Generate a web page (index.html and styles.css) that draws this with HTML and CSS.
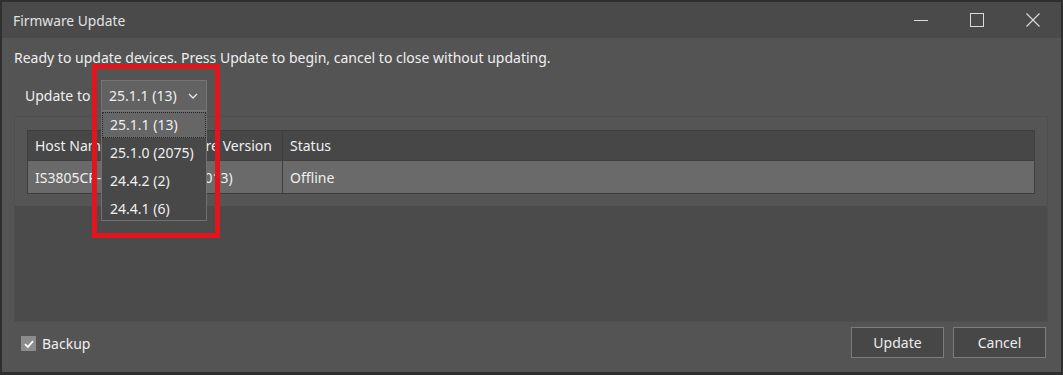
FILE: index.html
```html
<!DOCTYPE html>
<html lang="en">
<head>
  <meta charset="UTF-8" />
  <title>Firmware Update</title>
  <link rel="stylesheet" href="styles.css">
</head>
<body>
  <div class="window">
    <div class="titlebar">
      <span class="title">Firmware Update</span>
      <div class="controls">
        <span class="ctl">
          <svg width="14" height="14" viewBox="0 0 14 14"><path d="M0 7.5H14" stroke="#dcdcdc" stroke-width="1"/></svg>
        </span>
        <span class="ctl">
          <svg width="14" height="14" viewBox="0 0 14 14"><rect x="0.5" y="0.5" width="13" height="13" fill="none" stroke="#dcdcdc" stroke-width="1"/></svg>
        </span>
        <span class="ctl">
          <svg width="14" height="14" viewBox="0 0 14 14"><path d="M0.5 0.5L13.5 13.5M13.5 0.5L0.5 13.5" stroke="#dcdcdc" stroke-width="1.1"/></svg>
        </span>
      </div>
    </div>

    <div class="content">
      <p class="msg">Ready to update devices. Press Update to begin, cancel to close without updating.</p>

      <div class="update-row">
        <span class="label">Update to</span>
        <div class="combo">
          <span>25.1.1 (13)</span>
          <svg class="chev" width="10" height="6" viewBox="0 0 10 6"><path d="M1 1L5 5L9 1" fill="none" stroke="#e8e8e8" stroke-width="1.3"/></svg>
          <ul class="dropdown">
            <li class="selected">25.1.1 (13)</li>
            <li>25.1.0 (2075)</li>
            <li>24.4.2 (2)</li>
            <li>24.4.1 (6)</li>
          </ul>
          <div class="highlight"></div>
        </div>
      </div>

      <div class="panel">
        <div class="grid-wrap">
          <table class="grid">
            <tr class="head">
              <th class="c-host">Host Name</th>
              <th class="c-fw">Firmware Version</th>
              <th>Status</th>
            </tr>
            <tr class="row">
              <td class="c-host">IS3805CP-01</td>
              <td class="c-fw">24.4.1 (013)</td>
              <td>Offline</td>
            </tr>
          </table>
        </div>
      </div>
    </div>

    <div class="footer">
      <label class="check">
        <span class="box">
          <svg width="14" height="14" viewBox="0 0 14 14"><path d="M3 7.2L5.8 10L11 4.2" fill="none" stroke="#ffffff" stroke-width="1.8"/></svg>
        </span>
        Backup
      </label>
      <div class="buttons">
        <button class="btn">Update</button>
        <button class="btn">Cancel</button>
      </div>
    </div>
  </div>
</body>
</html>
```

FILE: styles.css
```css
* { box-sizing: border-box; }
html, body {
  margin: 0;
  padding: 0;
  background: #2e2e2e;
}
body {
  font-family: "Noto Sans", "Open Sans", sans-serif;
  font-size: 14px;
  color: #efefef;
}
.window {
  width: 1063px;
  height: 373px;
  border: 2px solid #2f2f2f;
  border-bottom-width: 1px;
  background: #545454;
  display: flex;
  flex-direction: column;
}
.titlebar {
  height: 36px;
  background: #4a4a4a;
  display: flex;
  align-items: center;
  justify-content: space-between;
  padding-left: 11px;
  flex-shrink: 0;
}
.title {
  color: #e2e2e2;
  font-size: 13.8px;
}
.controls {
  display: flex;
  height: 100%;
}
.ctl {
  width: 56px;
  display: flex;
  align-items: center;
  justify-content: center;
}
.ctl svg { display: block; }
.content {
  flex: 1;
  display: flex;
  flex-direction: column;
  padding: 0 13px 0 12px;
}
.msg {
  margin: 0;
  padding-top: 10px;
  height: 42px;
}
.update-row {
  display: flex;
  align-items: center;
  padding-left: 11px;
  height: 31px;
}
.label { width: 76px; }
.combo {
  position: relative;
  width: 106px;
  height: 31px;
  background: #626262;
  border: 1px solid #747474;
  display: flex;
  align-items: center;
  justify-content: space-between;
  padding: 0 8px 0 7px;
  z-index: 2;
}
.chev { display: block; margin-top: 1px; }
.dropdown {
  position: absolute;
  left: -1px;
  top: 30px;
  width: 106px;
  margin: 0;
  padding: 0;
  list-style: none;
  background: #484848;
  border: 1px solid #707070;
}
.dropdown li {
  height: 28px;
  line-height: 27px;
  padding-left: 8px;
}
.dropdown li.selected {
  background: #666666;
  border: 1px dotted #262626;
  height: 26px;
  line-height: 24px;
  padding-left: 7px;
  margin-bottom: 1px;
}
.dropdown li:last-child { height: 25px; }
.highlight {
  position: absolute;
  left: -10px;
  top: -17px;
  width: 128px;
  height: 174px;
  border: 5px solid #e3151c;
}
.panel {
  margin-top: 5px;
  height: 206px;
  background: #4b4b4b;
  border: 1px solid #4f4f4f;
}
.grid-wrap {
  background: #555555;
  padding: 13px 12px 12px 12px;
}
.grid {
  width: 100%;
  border-collapse: collapse;
  border: 1px solid #3d3d3d;
}
.grid th, .grid td {
  text-align: left;
  font-weight: normal;
  padding: 0 7px;
  border-right: 1px solid #3f3f3f;
}
.grid .head th {
  height: 30px;
  background: #474747;
}
.grid .row td {
  height: 33px;
  background: #6a6a6a;
  border-top: 1px solid #3f3f3f;
}
.c-host { width: 122px; }
.c-fw { width: 133px; }
.footer {
  height: 49px;
  display: flex;
  align-items: flex-start;
  justify-content: space-between;
  padding: 4px 15px 0 19px;
  flex-shrink: 0;
}
.check {
  display: flex;
  align-items: center;
  gap: 6px;
  font-size: 14px;
  margin-top: 7px;
}
.box {
  width: 15px;
  height: 15px;
  background: #8c8c8c;
  display: flex;
  align-items: center;
  justify-content: center;
}
.box svg { display: block; }
.buttons {
  display: flex;
  gap: 9px;
}
.btn {
  width: 93px;
  height: 31px;
  background: #474747;
  border: 1px solid #7c7c7c;
  color: #ececec;
  font-family: "Noto Sans", "Open Sans", sans-serif;
  font-size: 14px;
  padding: 0;
}
```
